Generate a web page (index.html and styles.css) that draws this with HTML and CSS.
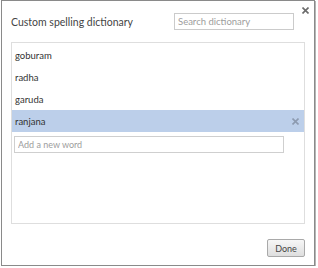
FILE: index.html
```html
<!DOCTYPE html>
<html lang="en">
<head>
    <meta charset="UTF-8">
    <title>Custom spelling dictionary</title>
    <link rel="stylesheet" href="styles.css">
</head>
<body>

<div class="dialog">
    <button class="close" title="Close">
        <svg width="7" height="7" viewBox="0 0 7 7"><path d="M0.5 0.5L6.5 6.5M6.5 0.5L0.5 6.5" stroke="#6b6b6b" stroke-width="1.6"/></svg>
    </button>

    <div class="header">
        <h1 class="title">Custom spelling dictionary</h1>
        <input class="search" type="text" placeholder="Search dictionary">
    </div>

    <div class="word_list">
        <div class="word">goburam</div>
        <div class="word">radha</div>
        <div class="word">garuda</div>
        <div class="word selected">
            <span>ranjana</span>
            <svg class="remove" width="7" height="7" viewBox="0 0 7 7"><path d="M0.5 0.5L6.5 6.5M6.5 0.5L0.5 6.5" stroke="#8d9bb0" stroke-width="1.6"/></svg>
        </div>
        <input class="new_word" type="text" placeholder="Add a new word">
    </div>

    <div class="footer">
        <button class="done">Done</button>
    </div>
</div>

</body>
</html>
```
FILE: styles.css
```css
 /*page*/
 body{
     margin: 0;
     background: #fff;
     font-family: "Lato", "Liberation Sans", sans-serif;
     color: #333;
 }

 .dialog{
     position: relative;
     box-sizing: border-box;
     width: 314px;
     height: 266px;
     margin-left: 1px;
     padding: 12px 9px 0 9px;
     border: 1px solid #8a8a8a;
     box-shadow: 1px 1px 0 #b5b5b5;
 }

 /*close button in the corner*/
 .close{
     position: absolute;
     top: 5px;
     right: 4px;
     width: 9px;
     height: 9px;
     padding: 1px;
     border: 0;
     background: none;
     line-height: 0;
 }

 /*title and search*/
 .header{
     display: flex;
     align-items: center;
     justify-content: space-between;
     height: 17px;
     margin-bottom: 12px;
 }
 .title{
     margin: 0;
     font-size: 10.5px;
     font-weight: normal;
     color: #444;
 }
 .search{
     box-sizing: border-box;
     width: 120px;
     height: 17px;
     margin-right: 11px;
     padding: 0 3px;
     border: 1px solid #cbcbcb;
     font-family: inherit;
     font-size: 9.5px;
     outline: none;
 }
 .search::placeholder,
 .new_word::placeholder{
     color: #9d9d9d;
 }

 /*word list*/
 .word_list{
     box-sizing: border-box;
     height: 182px;
     padding-top: 1px;
     border: 1px solid #dedede;
 }
 .word{
     display: flex;
     align-items: center;
     justify-content: space-between;
     height: 22px;
     padding: 0 5px 0 3px;
     font-size: 9.5px;
     color: #333;
 }
 .word.selected{
     background: #bccfea;
 }
 .new_word{
     display: block;
     box-sizing: border-box;
     width: 270px;
     height: 17px;
     margin: 4px 0 0 2px;
     padding: 0 3px;
     border: 1px solid #cfcfcf;
     font-family: inherit;
     font-size: 9px;
     outline: none;
 }

 /*footer*/
 .footer{
     display: flex;
     justify-content: flex-end;
     margin-top: 15px;
 }
 .done{
     box-sizing: border-box;
     width: 38px;
     height: 18px;
     padding: 0;
     border: 1px solid #a9a9a9;
     border-radius: 2px;
     background: linear-gradient(#f6f6f6, #dedede);
     font-family: inherit;
     font-size: 9px;
     color: #444;
 }
```
